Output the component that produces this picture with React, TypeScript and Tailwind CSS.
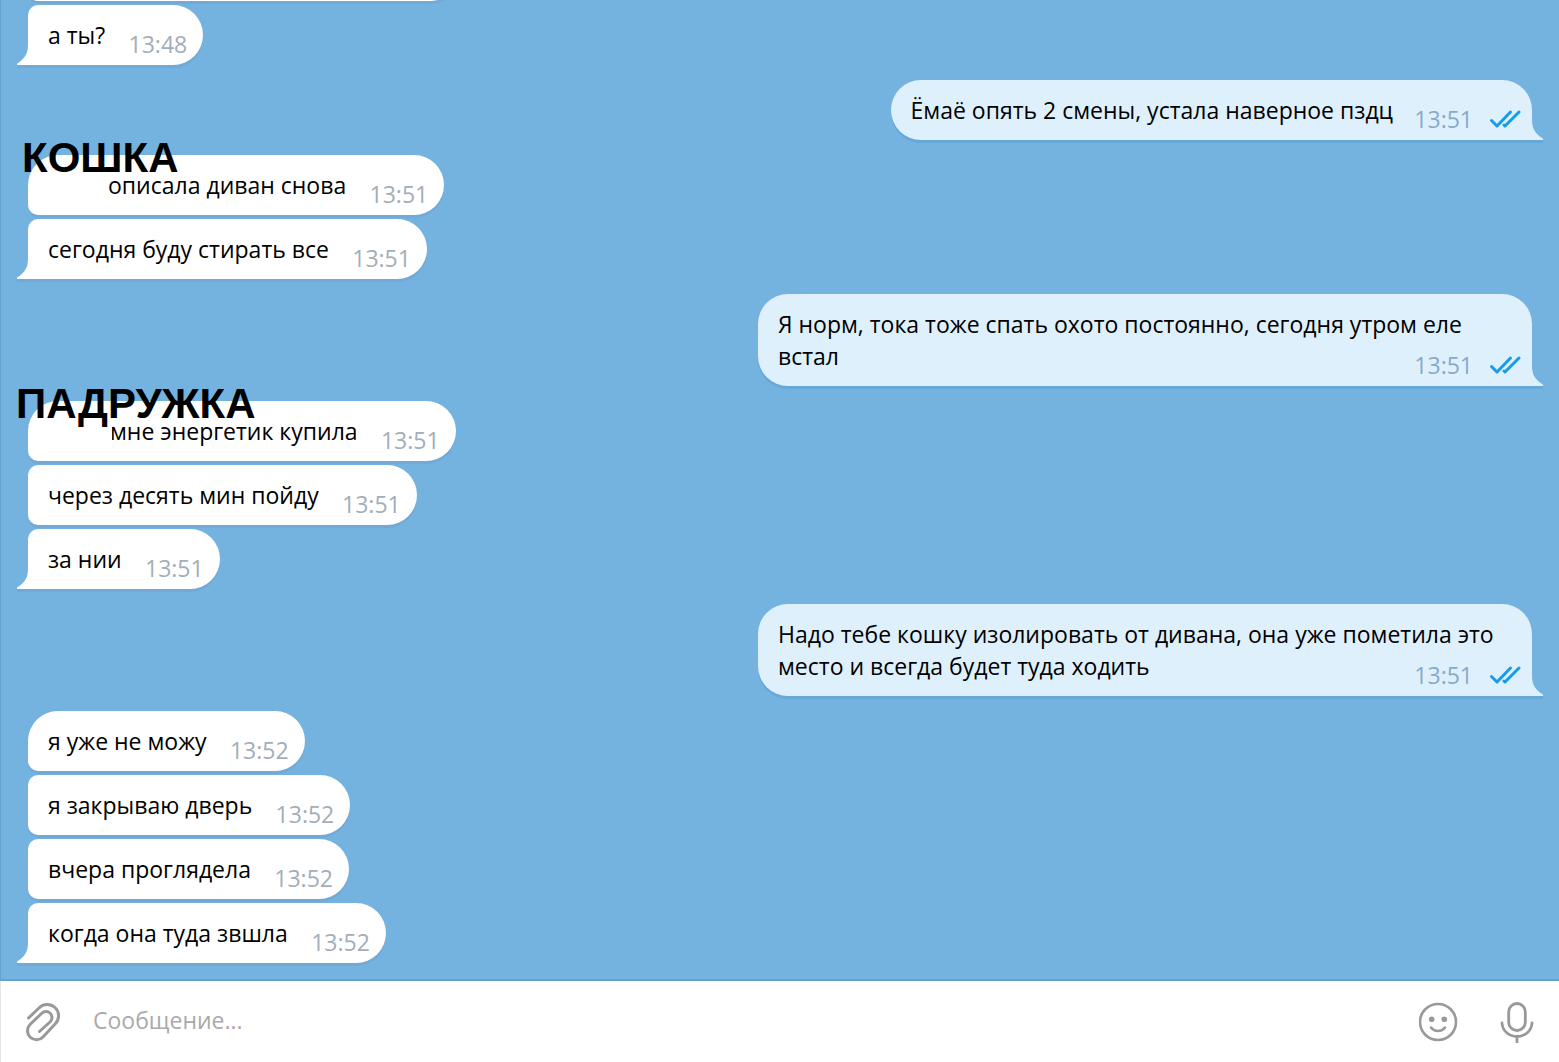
import React from 'react';
import clsx from 'clsx';

interface Message {
  id: number;
  text: string;
  time: string;
  out?: boolean;
  caption?: string;
  cut?: boolean;
}

const groups: Message[][] = [
  [{ id: 1, text: 'а ты?', time: '13:48' }],
  [{ id: 2, text: 'Ёмаё опять 2 смены, устала наверное пздц', time: '13:51', out: true }],
  [
    { id: 3, text: 'описала диван снова', time: '13:51', caption: 'КОШКА' },
    { id: 4, text: 'сегодня буду стирать все', time: '13:51' },
  ],
  [{ id: 5, text: 'Я норм, тока тоже спать охото постоянно, сегодня утром еле встал', time: '13:51', out: true }],
  [
    { id: 6, text: 'мне энергетик купила', time: '13:51', caption: 'ПАДРУЖКА', cut: true },
    { id: 7, text: 'через десять мин пойду', time: '13:51' },
    { id: 8, text: 'за нии', time: '13:51' },
  ],
  [
    {
      id: 9,
      text: 'Надо тебе кошку изолировать от дивана, она уже пометила это место и всегда будет туда ходить',
      time: '13:51',
      out: true,
    },
  ],
  [
    { id: 10, text: 'я уже не можу', time: '13:52' },
    { id: 11, text: 'я закрываю дверь', time: '13:52' },
    { id: 12, text: 'вчера проглядела', time: '13:52' },
    { id: 13, text: 'когда она туда звшла', time: '13:52' },
  ],
];

const Checks = () => (
  <svg className="h-5 w-8" viewBox="0 0 32 20" fill="none" stroke="#169ce8" strokeWidth="3" strokeLinecap="round" strokeLinejoin="round">
    <path d="M2.500 11.500 8 17 21.500 3" />
    <path d="M15 16 16 17 30 3" />
  </svg>
);

const Tail: React.FC<{ out?: boolean }> = ({ out }) => (
  <svg
    className={clsx('absolute bottom-[-3px] h-[23px] w-[12px]', out ? '-right-[11px] -scale-x-100' : '-left-[11px]')}
    viewBox="0 0 12 23"
  >
    <path d="M0 19h12v4H0z" fill={out ? '#66a8d8' : '#73a9d4'} />
    <path d="M12 0h-1C11 8 8 14 0 18.500V20h12z" fill={out ? '#dff0fd' : '#ffffff'} />
  </svg>
);

interface BubbleProps {
  message: Message;
  first: boolean;
  last: boolean;
}

const Bubble: React.FC<BubbleProps> = ({ message, first, last }) => {
  const { text, time, out, caption, cut } = message;

  return (
    <li className={clsx('flex', out ? 'justify-end' : 'justify-start')}>
      <div
        className={clsx(
          'relative max-w-[774px] px-5 py-3.5',
          out
            ? 'rounded-l-[30px] rounded-tr-[30px] bg-[#dff0fd] shadow-[0_3px_0_#66a8d8]'
            : 'rounded-r-[30px] bg-white shadow-[0_3px_0_#73a9d4]',
          !out && (first && !last ? 'rounded-tl-[30px]' : 'rounded-tl-[10px]'),
          !out && !last && 'rounded-bl-[10px]',
        )}
      >
        <p>
          {caption && <span className={clsx('relative z-10 inline-block h-5 bg-white align-middle', cut ? '-mr-0.5 w-16' : 'w-15')} />}
          {text}
          <span className={clsx('inline-block', out ? 'w-[119px]' : 'w-[78px]')} />
        </p>
        <div className={clsx('absolute bottom-[5px] flex items-center gap-4', out ? 'right-[11px] text-[#88aac8]' : 'right-4 text-[#a2aeb9]')}>
          <time>{time}</time>
          {out && <Checks />}
        </div>
        {last && <Tail out={out} />}
        {caption && (
          <strong
            className={clsx(
              "absolute -top-[22px] z-20 font-['Liberation_Sans',Arial,sans-serif] text-[42px] leading-[50px] font-bold",
              cut ? '-left-3' : '-left-1.5',
            )}
          >
            {caption}
          </strong>
        )}
      </div>
    </li>
  );
};

const App: React.FC = () => {
  return (
    <div className="flex h-screen flex-col bg-[#74b3e0] font-['Open_Sans','Noto_Sans',sans-serif] text-[23px] leading-8 text-black">
      <main className="flex min-h-0 flex-1 flex-col justify-end gap-[15px] overflow-hidden border-l border-[#68a1ca] pr-[27px] pb-4 pl-[27px]">
        <div className="-mb-[11px] h-15 w-[432px] shrink-0 rounded-r-[30px] rounded-l-[10px] bg-white shadow-[0_3px_0_#73a9d4]" />
        {groups.map((group) => (
          <ul key={group[0].id} className="flex shrink-0 flex-col gap-1">
            {group.map((message, i) => (
              <Bubble key={message.id} message={message} first={i === 0} last={i === group.length - 1} />
            ))}
          </ul>
        ))}
      </main>

      <div className="h-0.5 shrink-0 bg-[#68a1ca]" />
      <form className="flex shrink-0 items-center border-l border-[#e5e5e5] bg-white px-6" onSubmit={(e) => e.preventDefault()}>
        <button type="button" aria-label="Прикрепить файл" className="shrink-0">
          <svg className="h-10 w-9" viewBox="0 0 36 40" fill="none" stroke="#999" strokeWidth="3" strokeLinecap="round" strokeLinejoin="round">
            <path d="M3.500 16 14 6A11.300 11.300 0 0 1 30.500 21.500L18 35A9 9 0 0 1 5 22.500L16.500 11.500A6 6 0 0 1 25.500 19.500L14.500 29.500" />
          </svg>
        </button>
        <input
          type="text"
          aria-label="Сообщение"
          placeholder="Сообщение..."
          className="h-[81px] min-w-0 flex-1 bg-transparent pl-8 pb-1 outline-none placeholder:text-[#aaa]"
        />
        <div className="flex shrink-0 items-center gap-10">
          <button type="button" aria-label="Эмодзи">
            <svg className="h-10 w-10" viewBox="0 0 40 40" fill="none" stroke="#999" strokeWidth="2.6" strokeLinecap="round">
              <circle cx="19" cy="20" r="18" />
              <circle cx="12.700" cy="17.300" r="2.800" fill="#999" stroke="none" />
              <circle cx="25.300" cy="17.300" r="2.800" fill="#999" stroke="none" />
              <path d="M12 25.500C15.500 30.200 22.500 30.200 26 25.500" />
            </svg>
          </button>
          <button type="button" aria-label="Голосовое сообщение">
            <svg className="h-[42px] w-9" viewBox="0 0 36 42" fill="none" stroke="#999" strokeWidth="2.800" strokeLinecap="round">
              <rect x="9.700" y="2.500" width="16.600" height="27" rx="8.300" />
              <path d="M3 22C3.500 30 10 35.500 18 35.500S32.500 30 33 22" />
              <path d="M18 35v7" strokeLinecap="butt" />
            </svg>
          </button>
        </div>
      </form>
    </div>
  );
};

export default App;
